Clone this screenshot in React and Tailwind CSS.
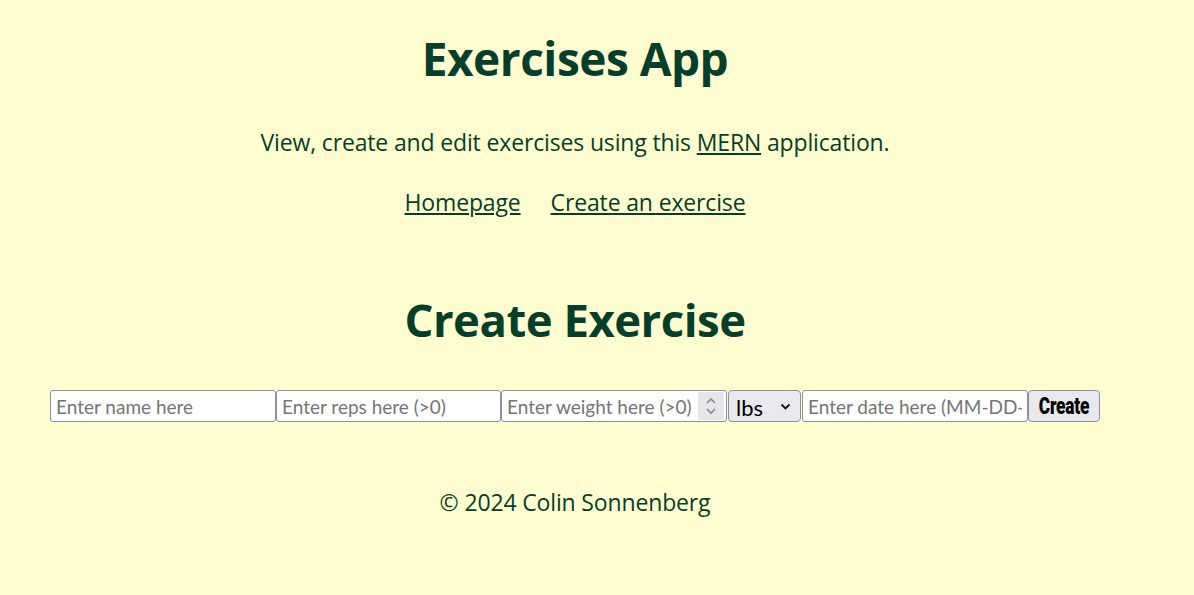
import { useState } from 'react';

const heading = { fontFamily: '"Open Sans", "Noto Sans", sans-serif' };
const field = { fontFamily: 'Lato, sans-serif' };

export default function App() {
  const [unit, setUnit] = useState('lbs');

  return (
    <div className="min-h-[595px] bg-[#fffccf] text-[#043f2b]" style={heading}>
      <div className="w-[1050px] ml-[50px] flex flex-col items-center">
        <header className="flex flex-col items-center">
          <h1 className="mt-[26px] text-[46px] leading-[64px] font-bold tracking-[-0.5px]">Exercises App</h1>
          <p className="mt-[37px] text-[23px] leading-[30px] tracking-[-0.15px]">
            View, create and edit exercises using this <a href="#" className="underline">MERN</a> application.
          </p>
          <nav className="mt-[30px] flex gap-[30px] text-[23px] leading-[30px] tracking-[-0.15px]">
            <a href="#" className="underline">Homepage</a>
            <a href="#" className="underline">Create an exercise</a>
          </nav>
        </header>

        <main className="flex flex-col items-center w-full">
          <h2 className="mt-[70px] text-[45.5px] leading-[64px] font-bold tracking-[-0.5px]">Create Exercise</h2>
          <form className="mt-[39px] flex items-center w-full" onSubmit={e => e.preventDefault()}>
            <input
              type="text"
              placeholder="Enter name here"
              className="w-[226px] h-[32px] bg-white border border-[#8f8f9d] rounded-[3px] px-[5px] text-[19px] text-black placeholder:text-[#757575]"
              style={field}
            />
            <input
              type="text"
              placeholder="Enter reps here (>0)"
              className="w-[225px] h-[32px] bg-white border border-[#8f8f9d] rounded-[3px] px-[5px] text-[19px] text-black placeholder:text-[#757575]"
              style={field}
            />
            <div className="w-[226px] h-[32px] bg-white border border-[#8f8f9d] rounded-[3px] flex items-center">
              <input
                type="text"
                placeholder="Enter weight here (>0)"
                className="flex-1 min-w-0 h-full pl-[5px] text-[19px] text-black placeholder:text-[#757575] outline-none bg-transparent"
                style={field}
              />
              <div className="w-[26px] h-[28px] mr-[2px] bg-[#e6e6ea] flex flex-col items-center justify-center">
                <svg width="12" height="22" viewBox="0 0 12 22" fill="none" stroke="#8a8a8a" strokeWidth="1.6">
                  <path d="M2 8 L6 4 L10 8" />
                  <path d="M2 14 L6 18 L10 14" />
                </svg>
              </div>
            </div>
            <div className="relative w-[74px] h-[32px] bg-[#e9e9ed] border border-[#8f8f9d] rounded-[4px] ml-[1px]">
              <select
                value={unit}
                onChange={e => setUnit(e.target.value)}
                className="appearance-none w-full h-full bg-transparent pl-[7px] text-[22px] text-black outline-none"
                style={field}
              >
                <option value="lbs">lbs</option>
                <option value="kgs">kgs</option>
              </select>
              <svg className="absolute right-[9px] top-[12px] pointer-events-none" width="11" height="8" viewBox="0 0 11 8" fill="none" stroke="#111" strokeWidth="1.8">
                <path d="M1.5 1.5 L5.5 5.5 L9.5 1.5" />
              </svg>
            </div>
            <input
              type="text"
              placeholder="Enter date here (MM-DD-YY)"
              className="w-[226px] h-[32px] bg-white border border-[#8f8f9d] rounded-[3px] px-[5px] ml-[1px] text-[19px] text-black placeholder:text-[#757575]"
              style={field}
            />
            <button
              type="submit"
              className="w-[73px] h-[32px] -mt-[1px] bg-[#e9e9ed] border border-[#8f8f9d] rounded-[4px] text-black flex items-center justify-center overflow-hidden"
            >
              <span
                className="inline-block text-[24px] leading-none font-black scale-x-[0.72] tracking-[-0.3px]"
                style={{ fontFamily: 'Roboto, sans-serif' }}
              >
                Create
              </span>
            </button>
          </form>
        </main>

        <footer className="mt-[65px] text-[23px] leading-[30px] tracking-[-0.15px]">
          <p>© 2024 Colin Sonnenberg</p>
        </footer>
      </div>
    </div>
  );
}
